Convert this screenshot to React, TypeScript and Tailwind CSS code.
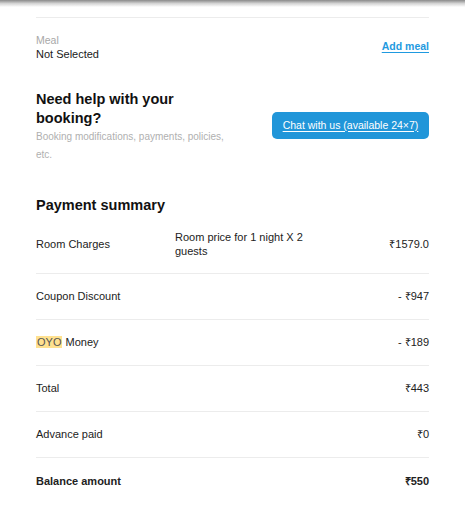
const rows = [
  { label: 'Coupon Discount', value: '- ₹947' },
  { label: 'OYO Money', value: '- ₹189', oyo: true },
  { label: 'Total', value: '₹443' },
  { label: 'Advance paid', value: '₹0' },
];

export default function App() {
  return (
    <div className="min-h-[512px] bg-white text-[#222] font-['Liberation_Sans',Arial,sans-serif]">
      {/* shadow from header above */}
      <div className="h-[7px] bg-gradient-to-b from-[#8a8a8a] via-[#d4d4d4] to-white" />

      <div className="px-9">
        <div className="mt-[10px] border-t border-[#ececec]" />

        {/* Meal */}
        <div className="flex items-center justify-between pt-[15px]">
          <div>
            <div className="text-[10.5px] leading-[14px] text-[#a8a8a8]">Meal</div>
            <div className="text-[11px] leading-[14px] text-[#1a1a1a]">Not Selected</div>
          </div>
          <a className="text-[10.5px] font-bold text-[#1f9ae0] underline underline-offset-2">Add meal</a>
        </div>

        {/* Help */}
        <div className="mt-[29px] flex items-center justify-between">
          <div className="w-[196px]">
            <h2 className="text-[14.5px] font-bold leading-[19px] text-[#111]">Need help with your booking?</h2>
            <p className="text-[10px] leading-[18px] text-[#b0b0b0]">
              Booking modifications, payments, policies, etc.
            </p>
          </div>
          <button className="mb-[3px] h-[27px] w-[157px] rounded-[5px] bg-[#2196d9] text-[10.5px] text-white underline underline-offset-2">
            Chat with us (available 24×7)
          </button>
        </div>

        {/* Payment summary */}
        <h2 className="mt-[32px] text-[14.5px] font-bold leading-[19px] text-[#111]">Payment summary</h2>

        <div className="mt-[15px] flex items-center border-b border-[#ececec] pb-[15px] text-[11px]">
          <div className="w-[139px]">Room Charges</div>
          <div className="w-[160px] leading-[14px]">Room price for 1 night X 2 guests</div>
          <div className="ml-auto">₹1579.0</div>
        </div>

        {rows.map((r) => (
          <div
            key={r.label}
            className="flex h-[46px] items-center justify-between border-b border-[#ececec] text-[11px]"
          >
            <div>
              {r.oyo ? (
                <>
                  <span className="bg-[#ffe18f] px-[1px] text-[#555]">OYO</span> Money
                </>
              ) : (
                r.label
              )}
            </div>
            <div>{r.value}</div>
          </div>
        ))}

        <div className="flex h-[46px] items-center justify-between text-[11px] font-bold">
          <div>Balance amount</div>
          <div>₹550</div>
        </div>
      </div>
    </div>
  );
}
